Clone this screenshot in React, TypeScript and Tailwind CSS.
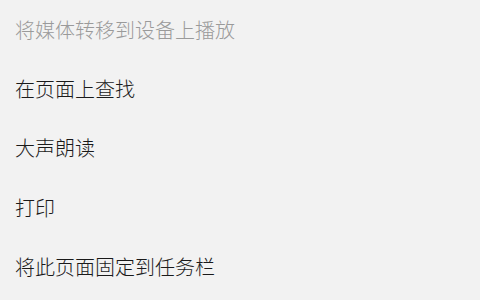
import React from 'react';

const items = [
  { label: '将媒体转移到设备上播放', disabled: true },
  { label: '在页面上查找' },
  { label: '大声朗读' },
  { label: '打印' },
  { label: '将此页面固定到任务栏' },
];

export default function App() {
  return (
    <div
      className="w-[480px] h-[300px] bg-[#f2f2f2] overflow-hidden"
      style={{ fontFamily: '"Noto Sans CJK SC", "Noto Sans", sans-serif' }}
    >
      {items.map((it) => (
        <div
          key={it.label}
          className={`h-[59.4px] flex items-center pl-[15px] text-[20px] leading-none font-light ${
            it.disabled ? 'text-[#9a9a9a]' : 'text-[#1a1a1a]'
          }`}
        >
          {it.label}
        </div>
      ))}
    </div>
  );
}
